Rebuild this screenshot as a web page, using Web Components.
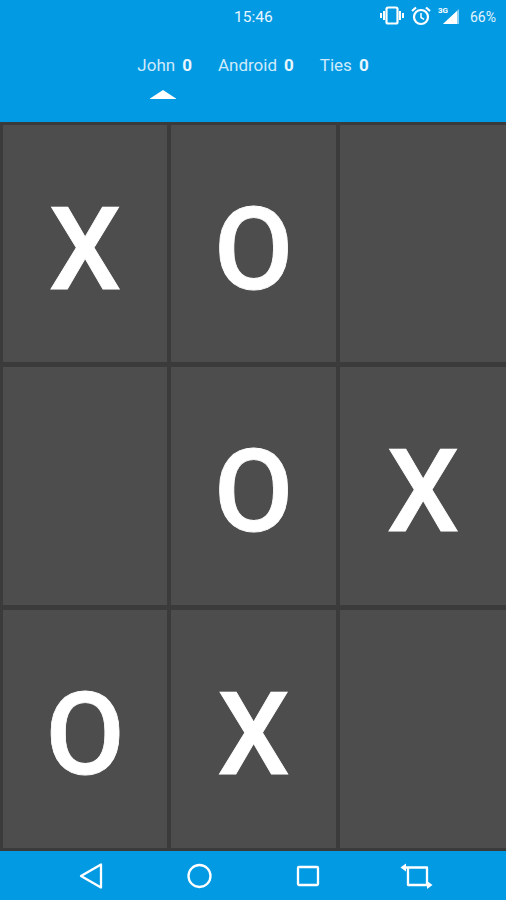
<!DOCTYPE html>
<html><head><meta charset="utf-8"><style>
html,body{margin:0;padding:0;background:#3b3b3b}
body{width:506px;height:900px;overflow:hidden;font-family:Roboto,sans-serif}
</style></head><body>
<ttt-app>
<ttt-status slot="status" time="15:46" battery="66%"></ttt-status>
<ttt-score slot="score" name="John" value="0" active></ttt-score>
<ttt-score slot="score" name="Android" value="0"></ttt-score>
<ttt-score slot="score" name="Ties" value="0"></ttt-score>
<ttt-cell slot="cell">X</ttt-cell><ttt-cell slot="cell">O</ttt-cell><ttt-cell slot="cell"></ttt-cell>
<ttt-cell slot="cell"></ttt-cell><ttt-cell slot="cell">O</ttt-cell><ttt-cell slot="cell">X</ttt-cell>
<ttt-cell slot="cell">O</ttt-cell><ttt-cell slot="cell">X</ttt-cell><ttt-cell slot="cell"></ttt-cell>
<ttt-nav slot="nav"></ttt-nav>
</ttt-app>
<script>
function def(name,html){customElements.define(name,class extends HTMLElement{connectedCallback(){if(this.shadowRoot)return;const s=this.attachShadow({mode:'open'});s.innerHTML=typeof html==='function'?html(this):html;}});}
def('ttt-app',`<style>
:host{display:grid;grid-template-rows:122px 729px 49px;width:506px;height:900px}
header{background:#039ae4;display:flex;flex-direction:column}
.scores{display:flex;justify-content:center;gap:26px;padding:19px 0 0 0}
main{display:grid;grid-template-columns:164px 165px 166px;grid-template-rows:237px 238px 238px;gap:5px 4px;padding:3px 0 3px 3px;background:#3b3b3b}
</style><header><slot name="status"></slot><div class="scores"><slot name="score"></slot></div></header><main><slot name="cell"></slot></main><slot name="nav"></slot>`);
def('ttt-status',h=>`<style>
:host{display:flex;align-items:center;height:34px;color:#eaf6fd;font-size:15.500px;position:relative}
.t{margin-left:234px;width:145px;font-weight:400}
.i{display:flex;align-items:center}
.b{margin-left:11px;font-size:14px;font-weight:400;color:#e4f4fc}
svg{display:block;margin-top:-2px}
</style><span class="t">${h.getAttribute('time')}</span><span class="i">
<svg width="24" height="24" viewBox="0 0 24 24" style="margin-left:1px"><rect x="6.500" y="3.500" width="11" height="16" rx="1.500" fill="none" stroke="#fff" stroke-width="2.200"/><path d="M0 9h2v5H0zM3 7h2v9H3zM19 7h2v9h-2zM22 9h2v5h-2z" fill="#fff"/></svg>
<svg width="24" height="24" viewBox="0 0 24 24" style="margin-left:5px"><circle cx="12" cy="13" r="7" fill="none" stroke="#fff" stroke-width="2.200"/><path d="M12 9v4.500l3 1.800" fill="none" stroke="#fff" stroke-width="1.500"/><path d="M3 7l4-3.500M21 7l-4-3.500" stroke="#fff" stroke-width="2.200"/></svg>
<svg width="24" height="24" viewBox="0 0 24 24" style="margin-left:2px"><path d="M24 5v15H8z" fill="#fff" opacity=".55"/><path d="M22 7V20H8z" fill="#fff"/><text x="3" y="9" font-family="Roboto" font-size="8" font-weight="700" fill="#fff">3G</text></svg>
</span><span class="b">${h.getAttribute('battery')}</span>`);
def('ttt-score',h=>`<style>
:host{display:flex;flex-direction:column;align-items:flex-start;color:#cfeafa;font-size:17px;line-height:24px;position:relative;white-space:nowrap}
b{font-weight:700;color:#e9f6fd;margin-left:7px}
svg{position:absolute;left:13px;top:37px}
</style><span>${h.getAttribute('name')}<b>${h.getAttribute('value')}</b></span>${h.hasAttribute('active')?'<svg width="26" height="10" viewBox="0 0 26 10"><path d="M13 0L26 8.500V9H0V8.500z" fill="#fff"/></svg>':''}`);
def('ttt-cell',`<style>
:host{display:flex;align-items:center;justify-content:center;box-sizing:border-box;padding-top:11px;background:#4d4d4d;color:#fff;font-size:115px;font-weight:500;-webkit-text-stroke:.8px #fff;line-height:1;overflow:hidden}
</style><slot></slot>`);
def('ttt-nav',`<style>
:host{display:block;background:#039ae4}
.r{display:grid;grid-template-columns:repeat(4,108.330px);padding-left:37px;height:49px;align-items:center}
svg{display:block;justify-self:center;margin-top:1px}
.s{fill:none;stroke:#fff;stroke-width:2.300;stroke-linejoin:round}
</style><div class="r">
<svg width="36" height="36" viewBox="0 0 36 36"><path class="s" d="M28 6.500v23L8 18z"/></svg>
<svg width="36" height="36" viewBox="0 0 36 36"><circle class="s" cx="18.500" cy="18" r="11"/></svg>
<svg width="36" height="36" viewBox="0 0 36 36"><rect class="s" x="8" y="9" width="20" height="18" rx="1"/></svg>
<svg width="36" height="36" viewBox="0 0 36 36"><path class="s" d="M8 9.500H29V27.500M10 9.500V27H29"/><path d="M2.500 9.500l5.500-4v8zM34.500 27l-5.500-4v8z" fill="#fff"/></svg>
</div>`);
</script></body></html>
